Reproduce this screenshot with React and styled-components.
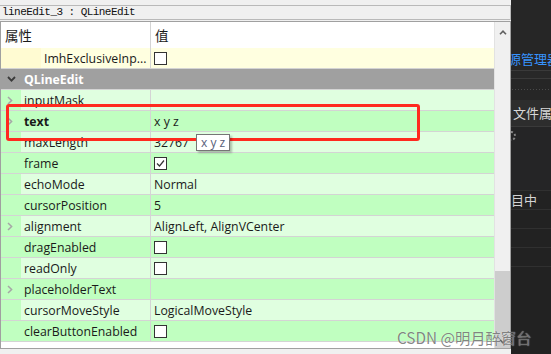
import React from 'react';
import styled, { createGlobalStyle } from 'styled-components';

const GlobalStyle = createGlobalStyle`
    html, body {
        margin: 0;
        padding: 0;
        width: 551px;
        height: 354px;
        overflow: hidden;
        background: #f0f0f0;
    }
    body {
        font-family: "Open Sans", "Noto Sans CJK SC", sans-serif;
        font-size: 12.3px;
        color: #1a1a1a;
    }
`;

const rows = [
    { name: 'inputMask', expand: true },
    { name: 'text', expand: true, bold: true, value: 'x y z' },
    { name: 'maxLength', value: '32767' },
    { name: 'frame', check: 'on' },
    { name: 'echoMode', value: 'Normal' },
    { name: 'cursorPosition', value: '5' },
    { name: 'alignment', expand: true, value: 'AlignLeft, AlignVCenter' },
    { name: 'dragEnabled', check: 'off' },
    { name: 'readOnly', check: 'off' },
    { name: 'placeholderText', expand: true },
    { name: 'cursorMoveStyle', value: 'LogicalMoveStyle' },
    { name: 'clearButtonEnabled', check: 'off' },
];

function Chevron({ dir, color }) {
    if (dir === 'down') {
        return (
            <svg width="9" height="6" viewBox="0 0 9 6">
                <polyline points="1,1 4.5,4.6 8,1" fill="none" stroke={color} strokeWidth="1.8" />
            </svg>
        );
    }
    if (dir === 'up') {
        return (
            <svg width="8" height="5" viewBox="0 0 8 5">
                <polyline points="1,4.3 4,1.2 7,4.3" fill="none" stroke={color} strokeWidth="1.6" />
            </svg>
        );
    }
    return (
        <svg width="6" height="9" viewBox="0 0 6 9">
            <polyline points="1,1 4.6,4.5 1,8" fill="none" stroke={color} strokeWidth="1.5" />
        </svg>
    );
}

function CheckBox({ on }) {
    return (
        <Box>
            {on && (
                <svg width="11" height="11" viewBox="0 0 11 11">
                    <polyline points="2,5.5 4.5,8 9,2.5" fill="none" stroke="#333" strokeWidth="1.2" />
                </svg>
            )}
        </Box>
    );
}

function App() {
    return (
        <Screen>
            <GlobalStyle />
            <Designer>
                <TitleBar>
                    <TitleField>lineEdit_3 : QLineEdit</TitleField>
                </TitleBar>
                <Frame>
                    <Grid>
                        <HeaderRow>
                            <NameCell $header>属性</NameCell>
                            <ValueCell $header>值</ValueCell>
                        </HeaderRow>
                        <Row $bg="#ffffe0">
                            <NameCell>
                                <Stripe $w={40} $bg="#fffbd2" />
                                <Label>ImhExclusiveInp...</Label>
                            </NameCell>
                            <ValueCell><CheckBox /></ValueCell>
                        </Row>
                        <GroupRow>
                            <Stripe $w={20} $bg="transparent"><Chevron dir="down" color="#3a3a3a" /></Stripe>
                            <GroupLabel>QLineEdit</GroupLabel>
                        </GroupRow>
                        {rows.map((r, i) => (
                            <Row key={r.name} $bg={i % 2 === 0 ? '#e0ffe0' : '#c0ffc0'}>
                                <NameCell>
                                    <Stripe $w={20} $bg="#c0ffc0">
                                        {r.expand && <Chevron color="#a6a6a6" />}
                                    </Stripe>
                                    <Label $bold={r.bold}>{r.name}</Label>
                                </NameCell>
                                <ValueCell>
                                    {r.value}
                                    {r.check && <CheckBox on={r.check === 'on'} />}
                                </ValueCell>
                            </Row>
                        ))}
                    </Grid>
                    <ScrollBar>
                        <ArrowButton><Chevron dir="up" color="#606060" /></ArrowButton>
                        <Track>
                            <Thumb />
                        </Track>
                        <ArrowButton $bg="#cdcdcd">
                            <svg width="8" height="5" viewBox="0 0 8 5">
                                <polyline points="1,0.8 4,3.8 7,0.8" fill="none" stroke="#606060" strokeWidth="1.6" />
                            </svg>
                        </ArrowButton>
                    </ScrollBar>
                </Frame>
            </Designer>
            <SidePanel>
                <PanelTop />
                <PanelTitle>资源管理器</PanelTitle>
                <PanelRule $h={7} />
                <DotRow />
                <PanelTab>文件属性</PanelTab>
                <GearArea>
                    <Gear />
                </GearArea>
                <ListRow $first>项目中</ListRow>
                <ListRow />
                <ListRow />
                <ListRow />
                <ListRow />
            </SidePanel>
            <Highlight />
            <Tooltip>x y z</Tooltip>
            <Watermark>CSDN @明月醉窗台</Watermark>
        </Screen>
    );
}

const Screen = styled.div`
    position: relative;
    display: flex;
    width: 551px;
    height: 354px;
    overflow: hidden;
`;

const Designer = styled.div`
    width: 511px;
    display: flex;
    flex-direction: column;
`;

const TitleBar = styled.div`
    height: 21px;
    padding-top: 5px;
    box-sizing: border-box;
`;

const TitleField = styled.div`
    height: 15px;
    box-sizing: border-box;
    border: 1px solid #b9b9b9;
    border-left: none;
    padding-left: 2px;
    font-family: "Liberation Mono", monospace;
    font-size: 11px;
    letter-spacing: -0.55px;
    line-height: 13px;
    color: #111;
`;

const Frame = styled.div`
    height: 328px;
    box-sizing: border-box;
    border: 1px solid #a0a0a0;
    display: flex;
    background: #fff;
`;

const Grid = styled.div`
    width: 493px;
    display: flex;
    flex-direction: column;
`;

const HeaderRow = styled.div`
    height: 26px;
    display: flex;
    background: #fff;
    font-family: "Noto Sans CJK SC", sans-serif;
    font-size: 13.5px;
`;

const Row = styled.div`
    height: 21px;
    box-sizing: border-box;
    border-bottom: 1px solid #d4d4d4;
    display: flex;
    background: ${p => p.$bg};
`;

const GroupRow = styled(Row)`
    background: #a0a0a0;
    align-items: center;
`;

const NameCell = styled.div`
    width: 150px;
    flex: none;
    box-sizing: border-box;
    border-right: 1px solid #d4d4d4;
    display: flex;
    align-items: center;
    padding-left: ${p => (p.$header ? '4px' : '0')};
`;

const ValueCell = styled.div`
    flex: 1;
    display: flex;
    align-items: center;
    padding-left: ${p => (p.$header ? '4px' : '3px')};
    white-space: nowrap;
`;

const Stripe = styled.div`
    width: ${p => p.$w}px;
    align-self: stretch;
    flex: none;
    background: ${p => p.$bg};
    display: flex;
    align-items: center;
    padding-left: 6px;
    box-sizing: border-box;
`;

const Label = styled.span`
    padding-left: 3px;
    font-weight: ${p => (p.$bold ? 700 : 400)};
    white-space: nowrap;
`;

const GroupLabel = styled.span`
    padding-left: 3px;
    font-weight: 700;
    color: #fff;
`;

const Box = styled.div`
    width: 13px;
    height: 13px;
    box-sizing: border-box;
    border: 1px solid #333;
    background: #fff;
    display: flex;
    align-items: center;
    justify-content: center;
`;

const ScrollBar = styled.div`
    width: 16px;
    box-sizing: border-box;
    border-left: 1px solid #e2e2e2;
    background: #f0f0f0;
    display: flex;
    flex-direction: column;
`;

const ArrowButton = styled.div`
    height: ${p => (p.$bg ? '14px' : '20px')};
    background: ${p => p.$bg || '#f0f0f0'};
    display: flex;
    align-items: center;
    justify-content: center;
`;

const Track = styled.div`
    flex: 1;
    display: flex;
    flex-direction: column;
    justify-content: flex-end;
`;

const Thumb = styled.div`
    height: 63px;
    background: #cdcdcd;
`;

const SidePanel = styled.div`
    width: 40px;
    background: #222;
    display: flex;
    flex-direction: column;
    overflow: hidden;
    font-family: "Noto Sans CJK SC", sans-serif;
    font-size: 13px;
    white-space: nowrap;
`;

const PanelTop = styled.div`
    height: 50px;
    background: #262626;
`;

const PanelTitle = styled.div`
    height: 20px;
    line-height: 18px;
    margin-left: -16px;
    background: #262626;
    color: #3794ff;
    border-bottom: 1px solid #3a3a3a;
`;

const PanelRule = styled.div`
    height: ${p => p.$h}px;
    background: #282828;
    border-bottom: 1px solid #3a3a3a;
`;

const DotRow = styled.div`
    height: 21px;
    background: #262626;
    background-image: radial-gradient(circle, #4a4a4a 0.8px, transparent 1px);
    background-size: 3px 21px;
`;

const PanelTab = styled.div`
    height: 26px;
    line-height: 26px;
    background: #2d2d2d;
    color: #d8d8d8;
    padding-left: 2px;
    border-bottom: 1px solid #3a3a3a;
`;

const GearArea = styled.div`
    height: 63px;
    background: #252526;
    padding-top: 4px;
    box-sizing: border-box;
`;

const Gear = styled.div`
    width: 10px;
    height: 10px;
    margin-left: -5px;
    border-radius: 50%;
    border: 2px dotted #888;
    box-sizing: border-box;
`;

const ListRow = styled.div`
    height: 19px;
    line-height: 18px;
    box-sizing: border-box;
    border-top: 1px solid #303030;
    color: #d4d4d4;
    margin-left: ${p => (p.$first ? '-13px' : '0')};
    background: #222;
`;

const Highlight = styled.div`
    position: absolute;
    left: 6px;
    top: 104px;
    width: 414px;
    height: 37px;
    box-sizing: border-box;
    border: 3px solid #ff2a1f;
    border-radius: 3px;
    pointer-events: none;
`;

const Tooltip = styled.div`
    position: absolute;
    left: 196px;
    top: 134px;
    height: 17px;
    box-sizing: border-box;
    padding: 0 4px;
    border: 1px solid #767676;
    background: #fff;
    box-shadow: 2px 2px 2px rgba(0, 0, 0, 0.25);
    color: #57607a;
    font-size: 12px;
    line-height: 15px;
`;

const Watermark = styled.div`
    position: absolute;
    left: 397px;
    top: 326px;
    font-family: "Noto Sans CJK SC", sans-serif;
    font-size: 15.3px;
    color: rgba(80, 80, 80, 0.7);
    text-shadow: 0 0 1px rgba(255, 255, 255, 0.8);
    white-space: nowrap;
    pointer-events: none;
`;

export default App;
